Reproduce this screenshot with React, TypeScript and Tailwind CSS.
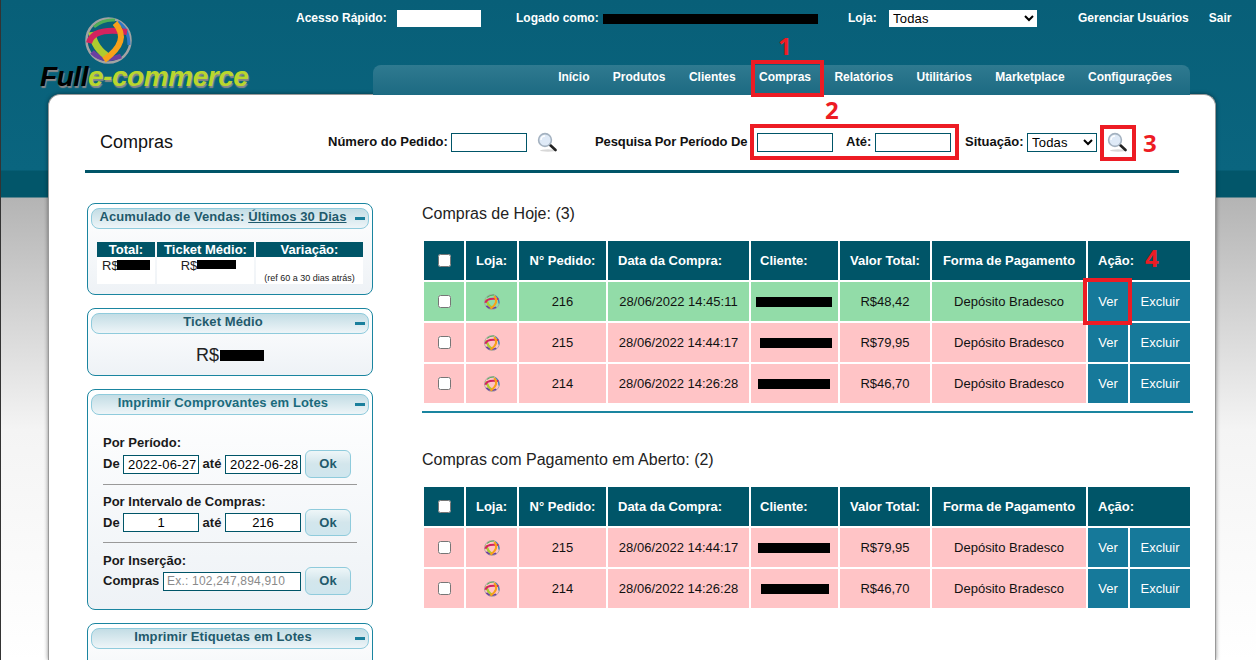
import React from "react";

const TODAY = [
  { id: 216, date: "28/06/2022 14:45:11", total: "R$48,42", paid: true, mask: 76, pad: 5 },
  { id: 215, date: "28/06/2022 14:44:17", total: "R$79,95", paid: false, mask: 72, pad: 9 },
  { id: 214, date: "28/06/2022 14:26:28", total: "R$46,70", paid: false, mask: 72, pad: 7 },
];

const OPEN = [
  { id: 215, date: "28/06/2022 14:44:17", total: "R$79,95", paid: false, mask: 72, pad: 7 },
  { id: 214, date: "28/06/2022 14:26:28", total: "R$46,70", paid: false, mask: 68, pad: 10 },
];

const NAV = ["Início", "Produtos", "Clientes", "Compras", "Relatórios", "Utilitários", "Marketplace", "Configurações"];

function Ring({ size }: { size: number }) {
  return (
    <svg width={size} height={size} viewBox="0 0 47 47" fill="none" className="block">
      <circle cx="23.5" cy="23.5" r="22" stroke="#a3a3a3" strokeWidth="2.5" />
      <path d="M9 10 Q 18 2 30 3" stroke="#4fae57" strokeWidth="3" />
      <path d="M33 5 Q 44 12 44 28" stroke="#2f78c4" strokeWidth="3" />
      <path d="M7 35 Q 18 46 36 39" stroke="#6b3fa0" strokeWidth="5" />
      <path d="M7 15 Q 9 32 25 41" stroke="#aecb2f" strokeWidth="7" />
      <path d="M4 26 Q 8 10 42 15" stroke="#d3235f" strokeWidth="6" />
      <path d="M30 6 Q 46 24 19 43" stroke="#f7a11a" strokeWidth="6" />
    </svg>
  );
}

function Logo() {
  return (
    <div className="w-[256px] shrink-0">
      <div className="ml-[45px] pt-[17px]">
        <Ring size={47} />
      </div>
      <div className="-mt-[1px] whitespace-nowrap text-[28px] leading-[28px] font-bold italic tracking-[-0.45px] [text-shadow:1px_2px_1px_#8a8a8a]">
        <span className="text-black">Full</span>
        <span className="text-[#b9d62e]">e-commerce</span>
      </div>
    </div>
  );
}

function Magnifier() {
  return (
    <svg width="20" height="20" viewBox="0 0 20 20" className="block shrink-0">
      <ellipse cx="11" cy="18.5" rx="8" ry="1.2" fill="#d8d8d8" />
      <line x1="12" y1="12" x2="18.5" y2="18" stroke="#222" strokeWidth="2.6" strokeLinecap="round" />
      <circle cx="8" cy="8" r="6.4" fill="#dfeaf7" stroke="#a4b2c0" strokeWidth="1.6" />
      <path d="M4 8 A4 4 0 0 1 8 4" stroke="#fff" strokeWidth="1.4" fill="none" />
    </svg>
  );
}

function Field({ className = "", value, placeholder }: { className?: string; value?: string; placeholder?: string }) {
  return (
    <input
      readOnly
      value={value ?? ""}
      placeholder={placeholder}
      className={"h-[19px] shrink-0 border border-[#005568] bg-white text-[13px] font-normal text-black outline-none placeholder:text-[#8a8a8a] " + className}
    />
  );
}

function Panel({ title, className = "", children }: { title: React.ReactNode; className?: string; children?: React.ReactNode }) {
  return (
    <div className={"mb-[13px] rounded-lg border border-[#1a85a0] bg-gradient-to-b from-white to-[#eef2f6] px-[3px] pt-[4px] " + className}>
      <div className="relative flex h-[21px] items-start justify-center rounded-lg border border-[#8fcbdc] bg-gradient-to-b from-[#c3dde5] to-[#eef5f8] pr-[14px] text-[13px] leading-[15px] font-bold tracking-[0.1px] text-[#1f5a6c]">
        <span>{title}</span>
        <span className="absolute top-[8px] right-[3px] h-[3px] w-[10px] bg-[#1a7f9c]" />
      </div>
      {children}
    </div>
  );
}

function OkButton({ className = "" }: { className?: string }) {
  return (
    <button className={"ml-[4px] w-[46px] rounded-md border border-[#8fcbdc] bg-gradient-to-b from-[#eef6f8] via-[#d3e6ec] to-[#cfe6ee] text-[13px] font-bold text-[#1f5a6c] " + className}>
      Ok
    </button>
  );
}

function OrdersTable({ rows }: { rows: typeof TODAY }) {
  const th = "bg-[#005568] text-[13px] font-bold text-white";
  return (
    <table className="table-fixed border-separate border-spacing-[2px] w-[770px] text-[13px] text-[#111]">
      <colgroup>
        <col className="w-[40px]" />
        <col className="w-[51px]" />
        <col className="w-[87px]" />
        <col className="w-[141px]" />
        <col className="w-[87px]" />
        <col className="w-[90px]" />
        <col className="w-[154px]" />
        <col className="w-[40px]" />
        <col className="w-[60px]" />
      </colgroup>
      <thead>
        <tr className="h-[39px]">
          <th className={th}><input type="checkbox" className="block mx-auto" /></th>
          <th className={th}>Loja:</th>
          <th className={th}>N° Pedido:</th>
          <th className={th + " pl-[10px] text-left"}>Data da Compra:</th>
          <th className={th + " pl-[9px] text-left"}>Cliente:</th>
          <th className={th}>Valor Total:</th>
          <th className={th}>Forma de Pagamento</th>
          <th colSpan={2} className={th + " pl-[10px] text-left"}>Ação:</th>
        </tr>
      </thead>
      <tbody>
        {rows.map((row) => {
          const bg = row.paid ? "bg-[#92dca8]" : "bg-[#ffc4c6]";
          return (
            <tr key={row.id} className="h-[39px] text-center">
              <td className={bg}><input type="checkbox" className="block mx-auto" /></td>
              <td className={bg}><div className="flex justify-center"><Ring size={16} /></div></td>
              <td className={bg}>{row.id}</td>
              <td className={bg}>{row.date}</td>
              <td className={bg + " text-left"}>
                <span className="block h-[10px] bg-black" style={{ width: row.mask, marginLeft: row.pad }} />
              </td>
              <td className={bg}>{row.total}</td>
              <td className={bg}>Depósito Bradesco</td>
              <td className="bg-[#16799a] text-white">Ver</td>
              <td className="bg-[#16799a] text-white">Excluir</td>
            </tr>
          );
        })}
      </tbody>
    </table>
  );
}

function Sidebar() {
  return (
    <aside className="w-[286px] shrink-0">
      <Panel title={<>Acumulado de Vendas: <u>Últimos 30 Dias</u></>} className="h-[92px]">
        <div className="mx-[6px] mt-[13px] grid grid-cols-[58px_97px_107px] gap-x-[2px] text-center">
          <div className="h-[15px] bg-[#005568] text-[13px] leading-[15px] font-bold text-white">Total:</div>
          <div className="h-[15px] bg-[#005568] text-[13px] leading-[15px] font-bold text-white">Ticket Médio:</div>
          <div className="h-[15px] bg-[#005568] text-[13px] leading-[15px] font-bold text-white">Variação:</div>
          <div className="flex h-[27px] items-start bg-white pl-[5px] text-[13px] leading-[17px] text-[#222]">
            R$<span className="mt-[3px] -ml-[2px] block h-[10px] w-[33px] bg-black" />
          </div>
          <div className="flex h-[27px] items-start justify-center bg-white pl-[6px] text-[13px] leading-[17px] text-[#222]">
            R$<span className="mt-[3px] block h-[9px] w-[39px] bg-black" />
          </div>
          <div className="flex h-[27px] items-end justify-center bg-white pb-[1px] text-[9px] leading-[10px] text-[#222]">
            (ref 60 a 30 dias atrás)
          </div>
        </div>
      </Panel>

      <Panel title="Ticket Médio" className="h-[68px]">
        <div className="mt-[9px] flex items-center justify-center text-[18px] leading-[24px] text-[#222]">
          R$<span className="ml-[1px] block h-[11px] w-[44px] bg-black" />
        </div>
      </Panel>

      <Panel title={<span className="text-[#1a6a7c]">Imprimir Comprovantes em Lotes</span>} className="h-[221px]">
        <div className="pt-[20px] pl-[12px] text-[13px] leading-[16px] font-bold text-[#1a1a1a]">
          <p>Por Período:</p>
          <div className="mt-[-1px] flex h-[28px] items-center">
            <span className="w-[20px]">De</span>
            <Field value="2022-06-27" className="w-[76px] pl-[4px] tracking-[0.2px]" />
            <span className="w-[26px] text-center">até</span>
            <Field value="2022-06-28" className="w-[76px] pl-[4px] tracking-[0.2px]" />
            <OkButton className="h-[28px]" />
          </div>
          <div className="mt-[6px] w-[254px] border-t border-[#999]" />
          <p className="mt-[9px]">Por Intervalo de Compras:</p>
          <div className="mt-[-1px] flex h-[27px] items-center">
            <span className="w-[20px]">De</span>
            <Field value="1" className="w-[76px] text-center" />
            <span className="w-[26px] text-center">até</span>
            <Field value="216" className="w-[76px] text-center" />
            <OkButton className="h-[27px]" />
          </div>
          <div className="mt-[6px] w-[254px] border-t border-[#999]" />
          <p className="mt-[10px]">Por Inserção:</p>
          <div className="mt-[-2px] flex h-[28px] items-center">
            <span className="w-[60px]">Compras</span>
            <Field placeholder="Ex.: 102,247,894,910" className="w-[138px] px-[3px] !text-[12px] tracking-[0.2px]" />
            <OkButton className="h-[28px]" />
          </div>
        </div>
      </Panel>

      <Panel title="Imprimir Etiquetas em Lotes" className="h-[80px]" />
    </aside>
  );
}

export default function App() {
  return (
    <div className="relative h-[660px] w-full overflow-hidden bg-[linear-gradient(to_bottom,#085f78_0px,#0a657f_170px,#02566a_171px,#02566a_197px,#b4b4b4_198px,#f4f4f4_430px,#ffffff_660px)] font-['Liberation_Sans',Arial,sans-serif] shadow-[inset_1px_0_0_#333]">
      <header className="flex h-[94px] pl-[40px]">
        <Logo />
        <div className="min-w-0 flex-1">
          <div className="flex h-[37px] items-start pt-[10px] text-[12px] leading-[17px] font-bold text-white">
            <span className="w-[101px]">Acesso Rápido:</span>
            <input readOnly className="h-[17px] w-[84px] bg-white" />
            <span className="ml-[35px] w-[87px]">Logado como:</span>
            <span className="mt-[4px] block h-[10px] w-[215px] bg-black" />
            <span className="ml-[30px] w-[41px]">Loja:</span>
            <select className="h-[17px] w-[148px] bg-white text-[13px] font-normal tracking-[0.2px] text-black">
              <option>Todas</option>
            </select>
            <span className="ml-[41px]">Gerenciar Usuários</span>
            <span className="ml-[20px]">Sair</span>
          </div>
          <nav className="mt-[28px] ml-[77px] flex h-[30px] w-[817px] justify-end gap-[23.4px] rounded-t-lg bg-gradient-to-b from-[#2f7a90] to-[#1c6a82] pt-[4px] pr-[18px] text-[12px] leading-[16px] font-bold text-white">
            {NAV.map((item) => (
              <span key={item}>{item}</span>
            ))}
          </nav>
        </div>
      </header>

      <main className="ml-[48px] h-[566px] w-[1168px] rounded-t-xl border border-b-0 border-[#999] bg-white pl-[36px] shadow-[0_0_4px_rgba(0,0,0,0.45)]">
        <div className="flex h-[78px] w-[1094px] items-center border-b-[3px] border-[#005568] pt-[19px] text-[13px] font-bold text-[#111]">
          <h1 className="w-[243px] pl-[15px] text-[18px] font-normal text-[#111]">Compras</h1>
          <span className="w-[123px]">Número do Pedido:</span>
          <Field className="w-[76px]" />
          <span className="ml-[10px]"><Magnifier /></span>
          <span className="ml-[38px] w-[162px] whitespace-nowrap tracking-[-0.1px]">Pesquisa Por Período De</span>
          <Field className="w-[76px]" />
          <span className="ml-[13px] w-[29px]">Até:</span>
          <Field className="w-[76px]" />
          <span className="ml-[14px] w-[62px]">Situação:</span>
          <select className="h-[19px] w-[70px] shrink-0 border border-[#005568] bg-white text-[13px] font-normal tracking-[0.2px] text-black">
            <option>Todas</option>
          </select>
          <span className="ml-[10px]"><Magnifier /></span>
        </div>

        <div className="mt-[30px] flex items-start">
          <div className="ml-[2px]">
            <Sidebar />
          </div>
          <section className="ml-[49px] w-[771px]">
            <h2 className="mt-[1px] text-[16px] leading-[20px] font-normal text-[#222]">Compras de Hoje: (3)</h2>
            <div className="mt-[15px]">
              <OrdersTable rows={TODAY} />
            </div>
            <div className="mt-[6px] h-[2px] w-[771px] bg-[#1a85a0]" />
            <h2 className="mt-[37px] text-[16px] leading-[20px] font-normal text-[#222]">Compras com Pagamento em Aberto: (2)</h2>
            <div className="mt-[15px]">
              <OrdersTable rows={OPEN} />
            </div>
          </section>
        </div>
      </main>

      {/* red markers drawn over the screenshot */}
      <div className="absolute top-[60px] left-[751px] h-[37px] w-[73px] border-[4px] border-[#ed1c24]" />
      <div className="absolute top-[124px] left-[750px] h-[36px] w-[209px] border-[4px] border-[#ed1c24]" />
      <div className="absolute top-[125px] left-[1100px] h-[36px] w-[36px] border-[4px] border-[#ed1c24]" />
      <div className="absolute top-[278px] left-[1083px] h-[47px] w-[49px] border-[4px] border-[#ed1c24]" />
      <span className="absolute top-[30px] left-[778px] font-['Open_Sans',sans-serif] text-[24px] leading-[32px] font-bold text-[#ed1c24]">1</span>
      <span className="absolute top-[94px] left-[825px] font-['Open_Sans',sans-serif] text-[24px] leading-[32px] font-bold text-[#ed1c24]">2</span>
      <span className="absolute top-[127px] left-[1143px] font-['Open_Sans',sans-serif] text-[24px] leading-[32px] font-bold text-[#ed1c24]">3</span>
      <span className="absolute top-[242px] left-[1145px] font-['Open_Sans',sans-serif] text-[24px] leading-[32px] font-bold text-[#ed1c24]">4</span>
    </div>
  );
}
